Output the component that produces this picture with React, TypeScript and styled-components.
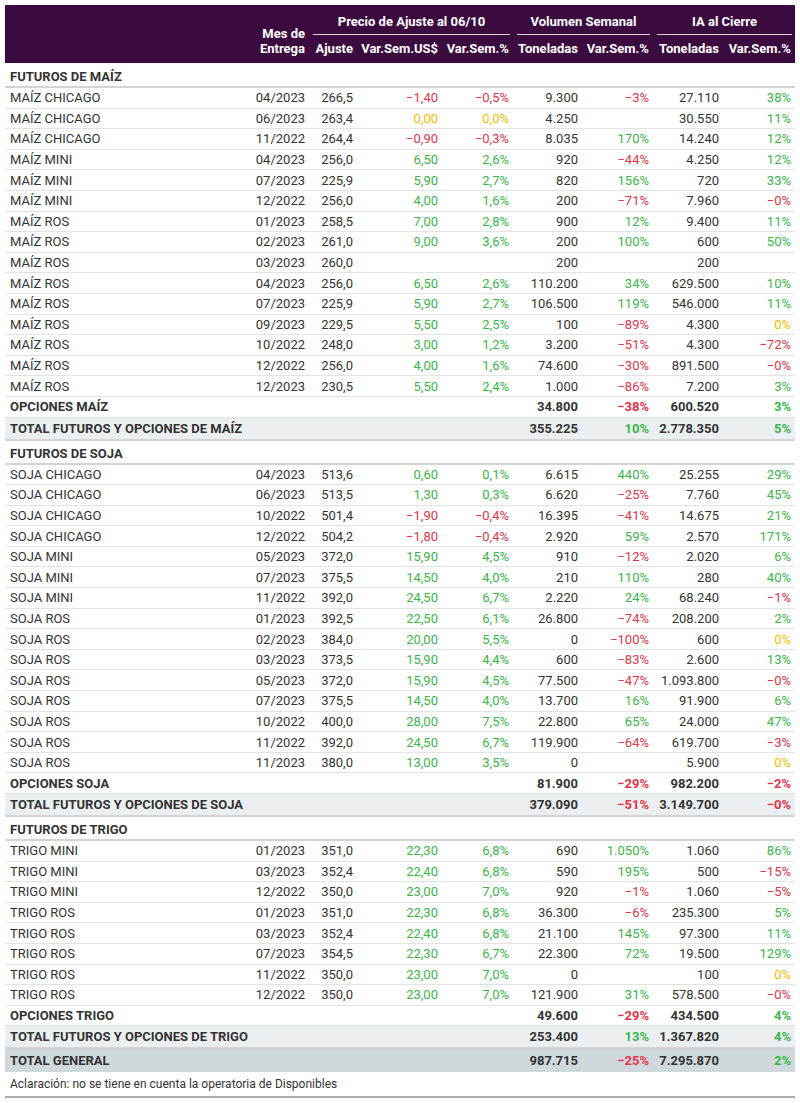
import React from 'react'
import styled, { createGlobalStyle, css } from 'styled-components'

const GlobalStyle = createGlobalStyle`
  body {
    margin: 0;
    background: #ffffff;
    font-family: Roboto, "Liberation Sans", Arial, sans-serif;
    color: #333333;
  }
`

const Wrapper = styled.div`
  padding: 5px 5px 0 5px;
`

const Table = styled.table`
  width: 790px;
  border-collapse: collapse;
  table-layout: fixed;
  font-size: 13px;
`

const HeadRow = styled.tr`
  background-color: #3b0a3f;
`

const HeadCell = styled.th<{ $align?: 'left' | 'right' | 'center'; $h?: number }>`
  color: #ffffff;
  font-weight: 700;
  font-size: 13px;
  padding: 0 4px 7px 4px;
  white-space: nowrap;
  text-align: ${(p) => p.$align ?? 'right'};
  vertical-align: bottom;
  height: ${(p) => p.$h ?? 25}px;
  line-height: 15px;
  box-sizing: border-box;
`

const GroupCell = styled.th`
  color: #ffffff;
  font-weight: 700;
  font-size: 13px;
  padding: 0 3px 3px 4px;
  height: 33px;
  box-sizing: border-box;
  vertical-align: bottom;
  text-align: center;
`

const GroupLabel = styled.span`
  display: block;
  padding-bottom: 5px;
  border-bottom: 1.5px solid #d9d2da;
  line-height: 15px;
`

type RowKind = 'section' | 'data' | 'options' | 'total' | 'general' | 'note'

const rowStyles: Record<RowKind, ReturnType<typeof css>> = {
  section: css`
    font-weight: 700;
    & > td {
      height: 24px;
      padding-top: 3px;
      box-sizing: border-box;
      border-bottom: 2px solid #d4d4d4;
    }
  `,
  data: css`
    & > td {
      height: 19.6px;
      border-bottom: 1px solid #e3e3e3;
    }
  `,
  options: css`
    font-weight: 700;
    & > td {
      height: 19.6px;
      border-bottom: 1px solid #e3e3e3;
    }
  `,
  total: css`
    font-weight: 700;
    background-color: #eceff1;
    & > td {
      height: 21px;
      border-bottom: 2px solid #d4d4d4;
    }
  `,
  general: css`
    font-weight: 700;
    background-color: #d1d8dc;
    & > td {
      height: 23px;
      border-top: 2px solid #f2f2f2;
    }
  `,
  note: css`
    & > td {
      height: 24px;
      font-size: 12px;
      border-bottom: 2px solid #acacac;
    }
  `,
}

const Row = styled.tr<{ $kind: RowKind }>`
  ${(p) => rowStyles[p.$kind]}
`

type Tone = 'plain' | 'up' | 'down' | 'flat'

const toneColor: Record<Tone, string> = {
  plain: '#333333',
  up: '#3bb54a',
  down: '#e3344a',
  flat: '#f5bd00',
}

const Cell = styled.td<{ $tone?: Tone; $align?: 'left' | 'right' }>`
  padding: 0 4px;
  line-height: 15px;
  white-space: nowrap;
  text-align: ${(p) => p.$align ?? 'right'};
  color: ${(p) => toneColor[p.$tone ?? 'plain']};
`

const NameCell = styled(Cell)`
  padding-left: 5px;
  text-align: left;
`

const toneOf = (v: string): Tone => {
  if (!v) return 'plain'
  if (v.startsWith('−')) return 'down'
  if (/^0(,0+)?%?$/.test(v)) return 'flat'
  return 'up'
}

type Line = [string, string, string, string, string, string, string, string, string]

const fix = (s: string) => s.replace(/-/g, '−')

const parse = (rows: string[]): Line[] =>
  rows.map((r) => r.split('|').map((c) => fix(c.trim())) as Line)

interface Group {
  title: string
  options: string
  total: string
  rows: Line[]
  opt: [string, string, string, string]
  tot: [string, string, string, string]
}

const groups: Group[] = [
  {
    title: 'FUTUROS DE MAÍZ',
    options: 'OPCIONES MAÍZ',
    total: 'TOTAL FUTUROS Y OPCIONES DE MAÍZ',
    rows: parse([
      'MAÍZ CHICAGO|04/2023|266,5|-1,40|-0,5%|9.300|-3%|27.110|38%',
      'MAÍZ CHICAGO|06/2023|263,4|0,00|0,0%|4.250||30.550|11%',
      'MAÍZ CHICAGO|11/2022|264,4|-0,90|-0,3%|8.035|170%|14.240|12%',
      'MAÍZ MINI|04/2023|256,0|6,50|2,6%|920|-44%|4.250|12%',
      'MAÍZ MINI|07/2023|225,9|5,90|2,7%|820|156%|720|33%',
      'MAÍZ MINI|12/2022|256,0|4,00|1,6%|200|-71%|7.960|-0%',
      'MAÍZ ROS|01/2023|258,5|7,00|2,8%|900|12%|9.400|11%',
      'MAÍZ ROS|02/2023|261,0|9,00|3,6%|200|100%|600|50%',
      'MAÍZ ROS|03/2023|260,0|||200||200|',
      'MAÍZ ROS|04/2023|256,0|6,50|2,6%|110.200|34%|629.500|10%',
      'MAÍZ ROS|07/2023|225,9|5,90|2,7%|106.500|119%|546.000|11%',
      'MAÍZ ROS|09/2023|229,5|5,50|2,5%|100|-89%|4.300|0%',
      'MAÍZ ROS|10/2022|248,0|3,00|1,2%|3.200|-51%|4.300|-72%',
      'MAÍZ ROS|12/2022|256,0|4,00|1,6%|74.600|-30%|891.500|-0%',
      'MAÍZ ROS|12/2023|230,5|5,50|2,4%|1.000|-86%|7.200|3%',
    ]),
    opt: ['34.800', '−38%', '600.520', '3%'],
    tot: ['355.225', '10%', '2.778.350', '5%'],
  },
  {
    title: 'FUTUROS DE SOJA',
    options: 'OPCIONES SOJA',
    total: 'TOTAL FUTUROS Y OPCIONES DE SOJA',
    rows: parse([
      'SOJA CHICAGO|04/2023|513,6|0,60|0,1%|6.615|440%|25.255|29%',
      'SOJA CHICAGO|06/2023|513,5|1,30|0,3%|6.620|-25%|7.760|45%',
      'SOJA CHICAGO|10/2022|501,4|-1,90|-0,4%|16.395|-41%|14.675|21%',
      'SOJA CHICAGO|12/2022|504,2|-1,80|-0,4%|2.920|59%|2.570|171%',
      'SOJA MINI|05/2023|372,0|15,90|4,5%|910|-12%|2.020|6%',
      'SOJA MINI|07/2023|375,5|14,50|4,0%|210|110%|280|40%',
      'SOJA MINI|11/2022|392,0|24,50|6,7%|2.220|24%|68.240|-1%',
      'SOJA ROS|01/2023|392,5|22,50|6,1%|26.800|-74%|208.200|2%',
      'SOJA ROS|02/2023|384,0|20,00|5,5%|0|-100%|600|0%',
      'SOJA ROS|03/2023|373,5|15,90|4,4%|600|-83%|2.600|13%',
      'SOJA ROS|05/2023|372,0|15,90|4,5%|77.500|-47%|1.093.800|-0%',
      'SOJA ROS|07/2023|375,5|14,50|4,0%|13.700|16%|91.900|6%',
      'SOJA ROS|10/2022|400,0|28,00|7,5%|22.800|65%|24.000|47%',
      'SOJA ROS|11/2022|392,0|24,50|6,7%|119.900|-64%|619.700|-3%',
      'SOJA ROS|11/2023|380,0|13,00|3,5%|0||5.900|0%',
    ]),
    opt: ['81.900', '−29%', '982.200', '−2%'],
    tot: ['379.090', '−51%', '3.149.700', '−0%'],
  },
  {
    title: 'FUTUROS DE TRIGO',
    options: 'OPCIONES TRIGO',
    total: 'TOTAL FUTUROS Y OPCIONES DE TRIGO',
    rows: parse([
      'TRIGO MINI|01/2023|351,0|22,30|6,8%|690|1.050%|1.060|86%',
      'TRIGO MINI|03/2023|352,4|22,40|6,8%|590|195%|500|-15%',
      'TRIGO MINI|12/2022|350,0|23,00|7,0%|920|-1%|1.060|-5%',
      'TRIGO ROS|01/2023|351,0|22,30|6,8%|36.300|-6%|235.300|5%',
      'TRIGO ROS|03/2023|352,4|22,40|6,8%|21.100|145%|97.300|11%',
      'TRIGO ROS|07/2023|354,5|22,30|6,7%|22.300|72%|19.500|129%',
      'TRIGO ROS|11/2022|350,0|23,00|7,0%|0||100|0%',
      'TRIGO ROS|12/2022|350,0|23,00|7,0%|121.900|31%|578.500|-0%',
    ]),
    opt: ['49.600', '−29%', '434.500', '4%'],
    tot: ['253.400', '13%', '1.367.820', '4%'],
  },
]

const widths = [235, 69, 48, 85, 71, 69, 71, 70, 72]

const SummaryRow: React.FC<{ kind: RowKind; label: string; values: string[] }> = ({
  kind,
  label,
  values,
}) => (
  <Row $kind={kind}>
    <NameCell colSpan={5}>{label}</NameCell>
    <Cell>{values[0]}</Cell>
    <Cell $tone={toneOf(values[1])}>{values[1]}</Cell>
    <Cell>{values[2]}</Cell>
    <Cell $tone={toneOf(values[3])}>{values[3]}</Cell>
  </Row>
)

export default function App() {
  return (
    <Wrapper>
      <GlobalStyle />
      <Table>
        <colgroup>
          {widths.map((w, i) => (
            <col key={i} style={{ width: w }} />
          ))}
        </colgroup>
        <thead>
          <HeadRow>
            <HeadCell rowSpan={2} $h={58} />
            <HeadCell rowSpan={2} $h={58}>
              Mes de
              <br />
              Entrega
            </HeadCell>
            <GroupCell colSpan={3}>
              <GroupLabel>Precio de Ajuste al 06/10</GroupLabel>
            </GroupCell>
            <GroupCell colSpan={2}>
              <GroupLabel>Volumen Semanal</GroupLabel>
            </GroupCell>
            <GroupCell colSpan={2}>
              <GroupLabel>IA al Cierre</GroupLabel>
            </GroupCell>
          </HeadRow>
          <HeadRow>
            <HeadCell>Ajuste</HeadCell>
            <HeadCell>Var.Sem.US$</HeadCell>
            <HeadCell>Var.Sem.%</HeadCell>
            <HeadCell>Toneladas</HeadCell>
            <HeadCell>Var.Sem.%</HeadCell>
            <HeadCell>Toneladas</HeadCell>
            <HeadCell>Var.Sem.%</HeadCell>
          </HeadRow>
        </thead>
        <tbody>
          {groups.map((g) => (
            <React.Fragment key={g.title}>
              <Row $kind="section">
                <NameCell colSpan={9}>{g.title}</NameCell>
              </Row>
              {g.rows.map((r, i) => (
                <Row $kind="data" key={i}>
                  <NameCell>{r[0]}</NameCell>
                  <Cell>{r[1]}</Cell>
                  <Cell>{r[2]}</Cell>
                  <Cell $tone={toneOf(r[3])}>{r[3]}</Cell>
                  <Cell $tone={toneOf(r[4])}>{r[4]}</Cell>
                  <Cell>{r[5]}</Cell>
                  <Cell $tone={toneOf(r[6])}>{r[6]}</Cell>
                  <Cell>{r[7]}</Cell>
                  <Cell $tone={toneOf(r[8])}>{r[8]}</Cell>
                </Row>
              ))}
              <SummaryRow kind="options" label={g.options} values={g.opt} />
              <SummaryRow kind="total" label={g.total} values={g.tot} />
            </React.Fragment>
          ))}
          <SummaryRow
            kind="general"
            label="TOTAL GENERAL"
            values={['987.715', '−25%', '7.295.870', '2%']}
          />
          <Row $kind="note">
            <NameCell colSpan={9}>
              Aclaración: no se tiene en cuenta la operatoria de Disponibles
            </NameCell>
          </Row>
        </tbody>
      </Table>
    </Wrapper>
  )
}
